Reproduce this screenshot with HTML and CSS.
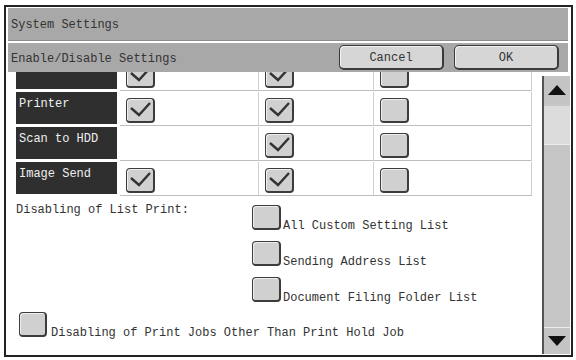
FILE: index.html
```html
<!DOCTYPE html>
<html lang="en">
<head>
  <meta charset="UTF-8">
  <title>System Settings</title>
  <link rel="stylesheet" href="styles.css">
</head>
<body>
  <div class="screen">
    <div class="title-bar">System Settings</div>

    <div class="sub-bar">
      <span class="sub-title">Enable/Disable Settings</span>
      <button class="key">Cancel</button>
      <button class="key">OK</button>
    </div>

    <div class="body">
      <div class="scroll-view">
        <div class="content">
          <div class="row">
            <div class="label"></div>
            <div class="cell col1"><span class="check on"></span></div>
            <div class="cell col2"><span class="check on"></span></div>
            <div class="cell col3"><span class="check"></span></div>
          </div>
          <div class="row">
            <div class="label">Printer</div>
            <div class="cell col1"><span class="check on"></span></div>
            <div class="cell col2"><span class="check on"></span></div>
            <div class="cell col3"><span class="check"></span></div>
          </div>
          <div class="row">
            <div class="label">Scan to HDD</div>
            <div class="cell col1"></div>
            <div class="cell col2"><span class="check on"></span></div>
            <div class="cell col3"><span class="check"></span></div>
          </div>
          <div class="row">
            <div class="label">Image Send</div>
            <div class="cell col1"><span class="check on"></span></div>
            <div class="cell col2"><span class="check on"></span></div>
            <div class="cell col3"><span class="check"></span></div>
          </div>

          <div class="list-print">
            <div class="list-label">Disabling of List Print:</div>
            <div class="options">
              <div class="option"><span class="check"></span><span>All Custom Setting List</span></div>
              <div class="option"><span class="check"></span><span>Sending Address List</span></div>
              <div class="option"><span class="check"></span><span>Document Filing Folder List</span></div>
            </div>
          </div>

          <div class="option hold-job"><span class="check"></span><span>Disabling of Print Jobs Other Than Print Hold Job</span></div>
        </div>
      </div>

      <div class="scrollbar">
        <div class="arrow up"></div>
        <div class="thumb"></div>
        <div class="track"></div>
        <div class="arrow down"></div>
      </div>
    </div>
  </div>
</body>
</html>
```

FILE: styles.css
```css
body {
  margin: 0;
  font-family: 'Liberation Mono', 'Courier New', monospace;
  font-size: 12px;
  color: #333;
  background-color: #FFFFFF;
}

.screen {
  margin: 5px 0 0 4px;
  width: 569px;
  height: 352px;
  box-sizing: border-box;
  border: 2px solid #222;
  background-color: #FFFFFF;
  display: flex;
  flex-direction: column;
}

.title-bar {
  margin: 1px 3px 0 2px;
  height: 32px;
  line-height: 34px;
  padding-left: 3px;
  background-color: #A8A8A8;
  border-bottom: 1px solid #8C8C8C;
}

.sub-bar {
  margin: 2px 3px 0 2px;
  height: 29px;
  padding-left: 3px;
  background-color: #A8A8A8;
  display: flex;
  align-items: center;
}

.sub-title {
  flex: 1;
  padding-top: 2px;
}

.key {
  width: 105px;
  height: 25px;
  margin-right: 10px;
  box-sizing: border-box;
  border: 1px solid #3A3A3A;
  border-right-width: 2px;
  border-bottom-width: 2px;
  border-radius: 5px;
  background-color: #D6D6D6;
  box-shadow: inset 1px 1px 0 #F2F2F2;
  font-family: inherit;
  font-size: 12px;
  color: #333;
  padding: 2px 0 0;
}

.key:last-child {
  margin-right: 9px;
}

.body {
  flex: 1;
  display: flex;
  min-height: 0;
}

.scroll-view {
  flex: 1;
  overflow: hidden;
  padding-left: 10px;
}

.content {
  margin-top: -15px;
}

.row {
  display: flex;
  height: 35px;
}

.label {
  width: 101px;
  height: 32px;
  margin-right: 3px;
  padding: 5px 0 0 3px;
  box-sizing: border-box;
  background-color: #2F2F2F;
  color: #F0F0F0;
}

.cell {
  height: 34px;
  box-sizing: border-box;
  padding: 6px 0 0 6px;
  border-right: 1px solid #CFCFCF;
  border-bottom: 1px solid #BDBDBD;
}

.col1 { width: 139px; }
.col2 { width: 115px; }
.col3 { width: 158px; }

.check {
  display: block;
  flex: none;
  width: 29px;
  height: 25px;
  box-sizing: border-box;
  border: 1px solid #3C3C3C;
  border-right-width: 2px;
  border-bottom-width: 2px;
  border-radius: 4px;
  background-color: #D0D0D0;
  box-shadow: inset 1px 1px 0 #EFEFEF;
}

.check.on {
  background-image: url("data:image/svg+xml,%3Csvg xmlns='http://www.w3.org/2000/svg' width='26' height='22'%3E%3Cpolyline points='4,9 12,16 23,4' fill='none' stroke='%23333' stroke-width='2.4'/%3E%3C/svg%3E");
  background-repeat: no-repeat;
}

.list-print {
  display: flex;
  padding-top: 8px;
}

.list-label {
  width: 236px;
  margin-top: -2px;
}

.options {
  display: flex;
  flex-direction: column;
  gap: 11px;
}

.option {
  display: flex;
  align-items: flex-end;
  line-height: 8px;
}

.option .check {
  margin-right: 2px;
}

.hold-job {
  margin: 10px 0 0 3px;
}

.hold-job .check {
  width: 28px;
  margin-right: 4px;
}

.scrollbar {
  width: 26px;
  margin: 4px 1px 1px 0;
  border-left: 2px solid #555;
  display: flex;
  flex-direction: column;
  background-color: #C6C6C6;
}

.arrow {
  height: 28px;
  display: flex;
  align-items: center;
  justify-content: center;
  background-color: #C4C4C4;
}

.arrow::after {
  content: "";
  border-left: 9px solid transparent;
  border-right: 9px solid transparent;
}

.arrow.up::after {
  border-bottom: 10px solid #111;
}

.arrow.down {
  height: 26px;
  border-top: 1px solid #ECECEC;
}

.arrow.down::after {
  border-top: 10px solid #111;
}

.thumb {
  height: 38px;
  margin-top: 2px;
  background-color: #DCDCDC;
  border-bottom: 1px solid #ECECEC;
}

.track {
  flex: 1;
}
```
